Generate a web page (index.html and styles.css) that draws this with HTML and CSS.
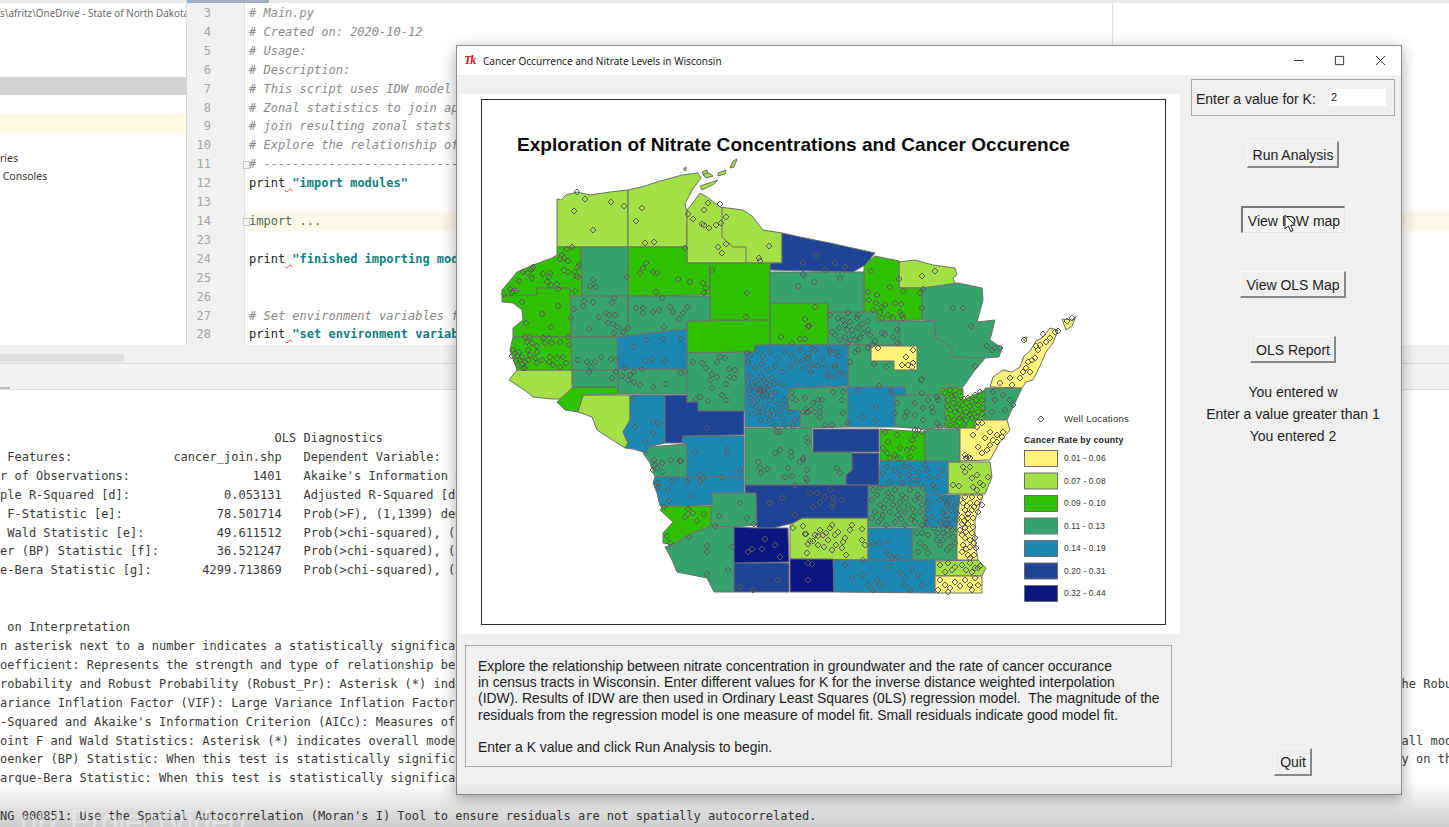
FILE: index.html
```html
<!DOCTYPE html>
<html lang="en">
<head>
<meta charset="utf-8">
<title>Cancer Occurrence and Nitrate Levels in Wisconsin</title>
<link rel="stylesheet" href="styles.css">
</head>
<body>
<div class="ide">
  <div class="top-strip"><span class="top-tab"></span></div>
  <div class="workspace">
    <aside class="project">
      <div class="path">s\afritz\OneDrive - State of North Dakota</div>
      <div class="band"></div>
      <div class="cream"></div>
      <div class="tree">ries</div>
      <div class="tree tree-b">&nbsp;Consoles</div>
    </aside>
    <section class="editor">
      <div class="gutter">
        <div>3</div><div>4</div><div>5</div><div>6</div><div>7</div><div>8</div><div>9</div><div>10</div><div>11</div><div>12</div><div>13</div><div>14</div><div>23</div><div>24</div><div>25</div><div>26</div><div>27</div><div>28</div>
      </div>
      <div class="code">
        <div class="cm"># Main.py</div>
        <div class="cm"># Created on: 2020-10-12</div>
        <div class="cm"># Usage:</div>
        <div class="cm"># Description:</div>
        <div class="cm"># This script uses IDW model to interpolate</div>
        <div class="cm"># Zonal statistics to join applied values</div>
        <div class="cm"># join resulting zonal stats to the tracts</div>
        <div class="cm"># Explore the relationship of nitrate and cancer</div>
        <div class="cm"><span class="fold"></span># ----------------------------------------</div>
        <div><span class="kw">print</span><span class="sq">&nbsp;</span><span class="str">"import modules"</span></div>
        <div>&nbsp;</div>
        <div class="hl"><span class="fold"></span><span class="imp">import ...</span></div>
        <div>&nbsp;</div>
        <div><span class="kw">print</span><span class="sq">&nbsp;</span><span class="str">"finished importing modules"</span></div>
        <div>&nbsp;</div>
        <div>&nbsp;</div>
        <div class="cm"># Set environment variables for the project</div>
        <div><span class="kw">print</span><span class="sq">&nbsp;</span><span class="str">"set environment variables"</span></div>
      </div>
    </section>
    <aside class="side-right"></aside>
  </div>
  <div class="hscroll"><span class="hscroll-thumb"></span></div>
  <div class="toolbar"><span class="toolbar-mark"></span></div>
  <pre class="console">                                      OLS Diagnostics
 Features:              cancer_join.shp   Dependent Variable:
r of Observations:                 1401   Akaike's Information Criterion
ple R-Squared [d]:             0.053131   Adjusted R-Squared [d]
 F-Statistic [e]:             78.501714   Prob(&gt;F), (1,1399) degrees of freedom
 Wald Statistic [e]:          49.611512   Prob(&gt;chi-squared), (1) degrees of freedom
er (BP) Statistic [f]:        36.521247   Prob(&gt;chi-squared), (1) degrees of freedom
e-Bera Statistic [g]:       4299.713869   Prob(&gt;chi-squared), (2) degrees of freedom


 on Interpretation
n asterisk next to a number indicates a statistically significant p-value (p &lt; 0.01).
oefficient: Represents the strength and type of relationship between each explanatory variable and the dependent variable.
robability and Robust Probability (Robust_Pr): Asterisk (*) indicates a coefficient is statistically significant (p &lt; 0.01); if the Koenker (BP) Statistic [f] is statistically significant, use the Robust Probability column
ariance Inflation Factor (VIF): Large Variance Inflation Factor (VIF) values (&gt; 7.5) indicate redundancy among explanatory variables.
-Squared and Akaike's Information Criterion (AICc): Measures of model fit/performance.
oint F and Wald Statistics: Asterisk (*) indicates overall model significance (p &lt; 0.01); if the Koenker (BP) Statistic [f] is statistically significant, use the Wald Statistic to determine overall model significance.
oenker (BP) Statistic: When this test is statistically significant (p &lt; 0.01), the relationships modeled are not consistent (either due to non-stationarity or heteroskedasticity). You should rely on the Robust
arque-Bera Statistic: When this test is statistically significant (p &lt; 0.01) model predictions are biased.

NG 000851: Use the Spatial Autocorrelation (Moran's I) Tool to ensure residuals are not spatially autocorrelated.</pre>
</div>

<div class="window">
  <header class="titlebar">
    <span class="tk">Tk</span>
    <span class="title">Cancer Occurrence and Nitrate Levels in Wisconsin</span>
    <span class="controls">
      <svg class="ctl" viewBox="0 0 12 12"><path d="M1 6h10"/></svg>
      <svg class="ctl" viewBox="0 0 12 12"><path d="M1.5 1.5h9v9h-9z"/></svg>
      <svg class="ctl" viewBox="0 0 12 12"><path d="M1 1l10 10M11 1L1 11"/></svg>
    </span>
  </header>
  <div class="content">
    <div class="left-col">
      <div class="map-panel">
        <div class="map-frame">
          <svg class="map" viewBox="483 101 681 522" width="681" height="522">
            <defs>
              <marker id="well" markerUnits="userSpaceOnUse" markerWidth="9" markerHeight="9" refX="4.5" refY="4.5">
                <path class="well-mark" d="M4.5 1.5L7.5 4.5 4.5 7.5 1.5 4.5z"/>
              </marker>
            </defs>
            <text class="map-title" x="517" y="151">Exploration of Nitrate Concentrations and Cancer Occurence</text>

            <g class="county">
              <!-- light green -->
              <polygon class="c2" points="557,199 561,200 566,195 577,192 590,195 610,192 628,190 628,247 557,247"/>
              <polygon class="c2" points="628,190 645,186 660,181 664,180 682,175 698,173 701,178 692,190 685,204 687,212 687,247 628,247"/>
              <polygon class="c2" points="687,210 692,204 700,193 707,197 720,207 743,210 752,216 763,230 782,233 782,263 687,263"/>
              <polyline class="inner" points="722,207 722,237 733,247 746,247 746,263"/>
              <polygon class="c2" points="509,380 517,370 572,370 572,399 552,399 533,397 527,392"/>
              <polygon class="c2" points="583,395 630,395 630,420 623,432 628,443 625,448 597,430 592,417 578,412"/>
              <polygon class="c2" points="790,525 802,518 868,518 868,560 790,559"/>
              <polygon class="c2" points="899,262 915,260 933,265 955,268 957,275 953,278 957,288 899,288"/>
              <polygon class="c2" points="948,462 990,462 992,477 985,494 948,494"/>
              <polygon class="c2" points="935,561 978,560 986,568 982,576 935,576"/>
              <!-- green -->
              <polygon class="c3" points="557,247 581,247 582,296 570,296 570,288 537,288 537,295 502,296 502,290 513,277 517,272 533,265 552,258 557,255"/>
              <polygon class="c3" points="502,296 537,295 537,288 570,288 571,337 513,337 513,328 523,320 522,310 513,303 502,302"/>
              <polygon class="c3" points="628,247 687,247 687,263 710,263 710,295 628,296"/>
              <polygon class="c3" points="710,263 770,263 770,320 710,320"/>
              <polygon class="c3" points="687,321 770,320 770,345 755,346 755,352 687,353"/>
              <polygon class="c3" points="513,337 571,337 572,370 530,370 517,370 510,350"/>
              <polygon class="c3" points="557,402 573,387 618,387 618,394 583,395 578,412 565,410"/>
              <polygon class="c3" points="663,506 711,506 711,526 693,533 672,545 663,543 663,533 673,522 660,510"/>
              <polygon class="c3" points="770,303 828,303 828,345 770,345"/>
              <polygon class="c3" points="864,265 875,256 899,261 899,288 922,288 922,320 877,321 877,312 864,312"/>
              <polygon class="c3" points="880,429 925,432 925,461 880,461"/>
              <polygon class="c3" points="940,388 963,388 963,400 985,390 985,420 975,420 975,428 945,428 945,407 940,397"/>
              <!-- teal -->
              <polygon class="c4" points="581,247 628,247 628,296 582,296"/>
              <polygon class="c4" points="571,296 628,296 628,327 617,337 571,337"/>
              <polygon class="c4" points="628,296 710,296 710,321 687,321 687,329 617,337 628,327"/>
              <polygon class="c4" points="571,337 617,337 618,370 572,370"/>
              <polygon class="c4" points="572,370 618,370 618,387 573,387"/>
              <polygon class="c4" points="618,369 687,369 687,394 618,394"/>
              <polygon class="c4" points="687,353 755,352 745,352 745,411 698,411 698,402 687,402"/>
              <polygon class="c4" points="648,447 687,444 687,477 655,477 650,463 643,453"/>
              <polygon class="c4" points="712,493 756,493 756,525 734,527 711,526"/>
              <polygon class="c4" points="672,545 693,533 711,526 734,527 734,592 714,592 707,578 677,572 672,560 665,547"/>
              <polygon class="c4" points="745,428 812,428 812,452 852,452 852,470 846,475 846,485 745,485"/>
              <polygon class="c4" points="770,272 864,272 864,312 828,312 828,303 770,303"/>
              <polygon class="c4" points="828,312 877,312 877,321 899,321 899,345 828,345"/>
              <polygon class="c4" points="922,288 958,283 982,288 983,300 977,322 995,320 990,340 1002,348 999,357 985,358 975,370 940,370 935,337 935,321 922,320"/>
              <polygon class="c4" points="848,345 899,345 899,321 935,321 935,337 952,347 952,357 985,358 975,370 963,387 940,388 940,395 905,395 905,387 848,387"/>
              <polygon class="c4" points="895,395 945,395 945,427 925,429 895,427"/>
              <polygon class="c4" points="788,388 848,387 848,427 800,428 800,410 788,410"/>
              <polygon class="c4" points="925,429 960,429 960,462 925,461"/>
              <polygon class="c4" points="868,486 925,486 925,527 868,527"/>
              <polygon class="c4" points="912,528 957,527 957,560 912,560"/>
              <polygon class="c4" points="985,388 1022,388 1007,420 985,420"/>
              <!-- blue -->
              <polygon class="c5" points="617,337 687,329 687,369 618,369"/>
              <polygon class="c5" points="630,395 665,395 665,443 648,447 647,453 633,449 625,448 628,443 623,432 630,420"/>
              <polygon class="c5" points="683,436 744,436 744,477 687,477 687,444 682,443"/>
              <polygon class="c5" points="655,477 744,477 744,493 712,493 712,505 660,506 657,493 653,483"/>
              <polygon class="c5" points="755,345 848,345 848,386 788,388 788,410 800,410 800,427 745,427 745,352 755,352"/>
              <polygon class="c5" points="848,387 905,387 905,395 895,395 895,427 848,427"/>
              <polygon class="c5" points="880,461 948,461 948,494 925,495 925,486 868,486 879,485"/>
              <polygon class="c5" points="925,495 960,495 957,527 925,527"/>
              <polygon class="c5" points="868,528 912,528 912,560 868,560"/>
              <polygon class="c5" points="833,560 935,560 935,593 834,592"/>
              <!-- dark blue -->
              <polygon class="c6" points="782,233 800,237 830,243 875,253 865,265 853,272 770,270 770,263 782,263"/>
              <polygon class="c6" points="665,395 687,395 687,402 698,402 698,411 744,411 744,435 683,436 682,443 665,443"/>
              <polygon class="c6" points="813,429 879,429 879,452 813,452"/>
              <polygon class="c6" points="852,453 879,453 879,485 846,485 846,475 852,470"/>
              <polygon class="c6" points="745,485 868,485 868,518 802,518 793,523 773,528 757,528 756,493 745,493"/>
              <polygon class="c6" points="734,563 789,563 789,592 734,592"/>
              <!-- navy -->
              <polygon class="c7" points="734,527 757,528 788,528 789,562 734,563"/>
              <polygon class="c7" points="790,559 833,559 834,592 790,592"/>
              <!-- yellow -->
              <polygon class="c1" points="871,346 917,346 917,370 894,370 894,361 871,361"/>
              <polygon class="c1" points="960,428 975,428 975,420 1007,420 1010,430 1000,442 990,460 960,461"/>
              <polygon class="c1" points="960,495 983,495 975,520 975,542 978,560 957,560 957,527"/>
              <polygon class="c1" points="935,576 982,576 982,593 935,593"/>
              <polygon class="c1" points="990,387 993,377 1003,370 1012,372 1020,367 1024,356 1030,351 1036,341 1042,338 1050,328 1058,330 1053,343 1046,352 1040,366 1033,380 1026,382 1022,388"/>
              <polygon class="c1" points="1062,319 1072,320 1076,316 1072,326 1066,330"/>
              <polygon class="c1" points="1022,338 1027,337 1026,342"/>
              <!-- Apostle islands -->
              <polygon class="c2" points="733,161 737,159 734,167 730,168"/>
              <polygon class="c2" points="702,172 707,170 708,174 704,176"/>
              <polygon class="c2" points="703,174 709,173 713,176 706,178"/>
              <polygon class="c2" points="718,173 726,170 725,174 718,176"/>
              <polygon class="c2" points="700,186 718,180 714,184 702,190"/>
              <polygon class="c2" points="683,169 686,167 686,171"/>
            </g>

            <g class="wells">
              <polyline points="577,192 585,199 611,202 624,206 574,211 593,230 642,208 636,221 645,243 654,242 708,203 704,210 688,214 693,219 726,217 720,204 702,224 704,225 709,228 716,225 721,223 718,247 726,244 722,253 769,246 759,258 760,261 685,248"/>
              <polyline points="572,247 567,249 562,255 560,259 564,258 568,261 579,265 578,267 575,272 564,270 568,272 576,276 578,277 533,267 532,269 523,272 528,273 532,278 519,281 543,274 550,273 549,277 547,282 551,285 557,284 558,289 575,291 513,291 510,289 504,294 512,293 516,291 522,302 542,314 558,306 526,323 551,327"/>
              <polyline points="525,337 530,337 543,338 549,338 527,342 532,343 537,346 545,343 552,343 560,342 568,337 569,345 513,350 517,356 520,360 525,362 518,365 525,368 530,355 528,350 535,358 537,352 530,355 542,360 550,357 549,362 557,358 553,365 563,357 566,363 560,367 537,363 523,368 515,353 519,352 522,357 516,361 512,356 522,364 528,360"/>
              <polyline points="593,280 590,286 596,287 627,277 646,263 643,268 640,273 653,272 657,273 678,279 690,282 703,283 706,288 704,293 656,292 662,298 712,270 747,293 746,317 593,302 584,301 583,306 574,309 571,318 614,298 612,303 606,313 609,315 615,315 599,317 608,323 613,324 618,327 628,328 623,332 614,333 589,329"/>
              <polyline points="636,308 643,308 643,313 653,312 659,310 670,307 673,312 687,307 683,313 679,319 664,327 747,353 646,340 663,339 681,339 634,347 645,361 652,359 665,361 625,368 578,360 587,362 595,362 601,357 611,359 616,360 591,367 589,372 693,362 702,363 706,368 717,362 720,357 725,358 729,369 717,377 616,372 612,378 622,376 630,375 634,372 642,369 628,380 634,382 640,385 653,387 666,384 681,373 685,372 710,380 712,388 726,384 730,377 734,378 735,370 712,374 722,395 726,400 696,399 700,397 708,401"/>
              <polyline points="750,355 757,350 763,356 770,352 778,358 785,352 792,356 800,350 808,354 815,350 822,358 830,352 838,356 835,365 826,366 748,362 755,368 762,364 768,370 775,366 782,372 790,366 797,362 804,368 811,372 818,366 828,374 840,372 750,376 756,381 761,376 766,383 772,378 768,390 760,388 760,390 761,391 754,392 750,398 757,400 763,396 770,400 776,392 782,384 765,406 772,410 778,404 758,412 752,405 785,400 790,412 795,420 782,418 770,420 760,420 748,382 753,386 758,384 764,380 770,385 775,384 758,394 764,390 767,395 772,396 749,390 756,406 762,412 768,414 774,414 752,414 780,410 786,406 775,425 785,425 793,426"/>
              <polyline points="805,398 813,403 822,400 833,392 843,392 842,400 843,413 820,407 820,412 807,412 820,417 825,425 832,425 848,423 796,400 792,392 792,398 803,412 808,412 815,412 818,400 811,410 806,409 858,390 876,406 862,417 876,420 891,391 892,393 895,413 907,412 905,417 897,403 915,403 923,408 932,407 928,400 938,400 922,393 937,397 915,415 933,412 923,420 937,423 940,427"/>
              <polyline points="945,393 950,390 955,395 960,392 948,400 953,403 958,400 963,405 968,398 975,395 980,392 972,402 978,405 982,400 950,410 955,412 960,410 966,412 972,410 978,412 983,408 948,418 954,420 960,418 966,420 972,418 978,422 950,425 957,426 964,424 952,396 957,407 964,399 970,406 976,400 947,406 962,416 970,415 976,417 982,414"/>
              <polyline points="885,432 888,442 883,448 887,453 897,435 900,448 895,455 900,458 912,440 915,435 918,430 915,430 922,432 907,450 897,458 913,448 910,457 890,458 807,438 808,442 758,462 760,468 761,473 767,469 780,450 775,453 791,452 791,457 803,458 800,462 788,468 792,476 785,477 807,470 806,478 777,432 780,432 795,485 837,468 840,473 807,480 803,460"/>
              <polyline points="695,452 727,450 727,453 740,470 700,475 703,478 722,477 634,398 635,427 653,422 658,423 653,433 645,442 707,428 654,460 662,463 671,460 680,461 681,461 655,465 657,468 662,472 653,470 658,483 658,487 672,482 687,482 700,482 668,490 692,496 669,501 664,507 688,509 685,517 688,514 693,513 704,514 697,521 667,536 670,543 689,537 740,503 719,516 747,518 715,526 754,524 707,546 707,552 732,547 707,574 728,570 765,539 752,549 748,552 762,549 775,545 780,557 740,587 778,580 753,590 808,563 812,564 808,580"/>
              <polyline points="793,528 803,526 806,534 818,536 808,544 813,541 807,553 805,534 810,541 815,535 820,530 826,533 830,528 832,525 828,540 835,535 838,532 824,547 832,550 843,542 842,548 852,525 862,529 862,540 865,545 863,560 818,545 823,535 873,544 879,543 888,541 887,552 890,555 898,557 892,558 917,533 922,533 928,535 937,540 943,533 947,530 948,535 920,543 925,547 918,552 928,553 943,540 950,547 947,550 940,545 955,543 953,537 952,530 943,528 845,538 850,530 836,545 846,555 938,533 946,524 950,520 946,516 940,522 934,528 845,565 852,578 862,575 868,585 877,580 873,590 880,585 900,572 905,578 912,570 918,575 922,585 910,590 905,585 890,566"/>
              <polyline points="928,502 947,503 943,512 932,517 947,505 957,513 957,520 928,510 927,523 950,527 873,490 880,488 888,493 895,490 902,495 910,490 918,495 872,500 880,505 886,500 893,505 900,502 908,505 915,500 922,505 875,512 883,515 890,512 898,515 905,512 913,516 920,512 925,518 878,522 886,525 895,522 905,525 915,522 922,525 887,467 883,473 895,470 900,475 910,468 918,472 927,470 930,477 913,480 935,488 923,488 938,477 942,470 890,482 902,483 933,485 833,503 825,497 842,500 817,493 813,507 832,507 770,503 782,498 795,515 810,493 820,502 833,498 830,490 877,495 884,508 892,498 899,509 906,498 913,509 920,498 911,519 901,519 881,519 872,518 909,475 918,480 925,465 904,466 945,498 952,498 955,505 940,500 951,510 945,520"/>
              <polyline points="982,423 990,432 997,435 1003,432 985,438 993,440 1002,437 978,447 987,450 982,453 965,455 968,457 970,458 966,458 990,445 973,435 977,427 997,442 963,467 970,467 965,472 972,478 977,475 988,477 980,483 953,485 959,486 973,487 983,485 977,490"/>
              <polyline points="965,497 972,497 980,497 963,503 970,503 977,503 982,505 965,510 972,510 978,512 962,517 968,518 973,518 962,524 968,524 973,527 960,530 966,532 972,533 965,538 970,540 975,538 963,545 970,547 976,548 962,552 968,555 974,555 940,565 948,563 955,567 962,565 970,563 975,568 980,566 945,572 952,570 966,570 972,572 978,568 940,580 945,585 938,590 950,588 955,582 960,586 965,580 970,585 972,590 975,578 978,585 948,592 960,500 967,506 974,507 968,514 964,521 965,528 962,535 974,543 966,549 970,558"/>
              <polyline points="1000,383 1010,378 1020,378 1012,385 1023,372 1032,360 1038,350 1040,345 1046,342 1050,338 1055,332 1058,331 1028,362 1035,358 993,392 995,400 1003,395 1010,400 1005,410 1013,405 992,412 953,308 963,308 971,326 987,346 992,350 995,348 1000,348 975,366 1026,368 1030,372 1036,346 1043,334 1067,321 1072,318 1024,340"/>
              <polyline points="848,313 858,315 857,318 850,322 868,321 830,315 832,332 839,328 845,325 852,330 858,328 863,333 870,335 845,337 850,340 860,338 848,343 875,341 885,334 893,337 897,330 882,333 898,343 858,350 868,348 855,352 871,271 890,287 868,292 877,295 869,300 876,303 885,305 895,303 901,304 882,307 873,310 880,312 888,315 900,312 902,315 882,318 893,318 903,318 903,291 920,293 923,289 922,308 899,279 922,276 935,271 838,318 843,320 847,330 853,335 855,340 862,324 868,330 835,335 840,340 872,345 878,348"/>
              <polyline points="804,275 814,282 840,278 803,274 798,286 815,307 805,319 808,326 809,326 781,337 800,339 805,339 792,343 803,263 816,255 845,267 825,270 835,263 812,348 830,350 837,352 808,358 813,365 803,360 835,367 850,362 828,377 835,376 843,374 810,365 913,350 906,357 902,365 908,365 913,363 912,367 874,364 886,367 922,379 921,380 879,386 1041,419"/>
            </g>

            <text class="legend-label" x="1064" y="422">Well Locations</text>
            <text class="legend-title" x="1024" y="443">Cancer Rate by county</text>
            <g class="legend">
              <rect class="c1" x="1024.5" y="450.5" width="33" height="16"/><text class="legend-item" x="1064" y="461">0.01 - 0.06</text>
              <rect class="c2" x="1024.5" y="473" width="33" height="16"/><text class="legend-item" x="1064" y="484">0.07 - 0.08</text>
              <rect class="c3" x="1024.5" y="495.5" width="33" height="16"/><text class="legend-item" x="1064" y="506">0.09 - 0.10</text>
              <rect class="c4" x="1024.5" y="518" width="33" height="16"/><text class="legend-item" x="1064" y="529">0.11 - 0.13</text>
              <rect class="c5" x="1024.5" y="540.5" width="33" height="16"/><text class="legend-item" x="1064" y="551">0.14 - 0.19</text>
              <rect class="c6" x="1024.5" y="563" width="33" height="16"/><text class="legend-item" x="1064" y="574">0.20 - 0.31</text>
              <rect class="c7" x="1024.5" y="585.5" width="33" height="16"/><text class="legend-item" x="1064" y="596">0.32 - 0.44</text>
            </g>
          </svg>
        </div>
      </div>
      <div class="intro">Explore the relationship between nitrate concentration in groundwater and the rate of cancer occurance<br>in census tracts in Wisconsin. Enter different values for K for the inverse distance weighted interpolation<br>(IDW). Results of IDW are then used in Ordinary Least Squares (0LS) regression model.  The magnitude of the<br>residuals from the regression model is one measure of model fit. Small residuals indicate good model fit.<br><br>Enter a K value and click Run Analysis to begin.</div>
    </div>
    <div class="right-col">
      <div class="k-frame">
        <label class="k-label">Enter a value for K:</label>
        <span class="k-entry">2</span>
      </div>
      <button class="btn btn-first">Run Analysis</button>
      <button class="btn btn-hover">View IDW map</button>
      <button class="btn">View OLS Map</button>
      <button class="btn">OLS Report</button>
      <div class="messages">
        <div>You entered w</div>
        <div>Enter a value greater than 1</div>
        <div>You entered 2</div>
      </div>
      <button class="btn btn-quit">Quit</button>
    </div>
  </div>
  <svg class="cursor" viewBox="0 0 12 19" width="12" height="19"><path d="M1 1v14l3.4-3 2.3 5.6 2.4-1-2.3-5.4H11z"/></svg>
</div>
<div class="video-fade"><span class="video-mark">ntz ProjectVideo</span></div>
</body>
</html>
```
FILE: styles.css
```css
* { box-sizing: border-box; }
html, body { margin: 0; height: 100%; }
body {
  width: 1449px;
  height: 827px;
  overflow: hidden;
  position: relative;
  background: #fff;
  font-family: "Liberation Sans", Arial, sans-serif;
}

/* Background IDE */
.ide { display: flex; flex-direction: column; height: 827px; }
.top-strip { height: 3px; background: #e9e9e9; padding-left: 187px; flex: none; }
.top-tab { display: block; width: 82px; height: 3px; background: #9fb0c0; }
.workspace { display: flex; height: 342px; flex: none; overflow: hidden; }

.project { width: 187px; flex: none; border-right: 1px solid #d6d6d6; overflow: hidden; color: #444; font-family: "Noto Sans", sans-serif; }
.path { font-size: 9.9px; line-height: 18px; margin-top: 1px; color: #6a6a6a; white-space: nowrap; }
.band { height: 18px; background: #d2d2d2; margin-top: 55px; }
.cream { height: 19px; background: #fdfbe4; margin-top: 19px; }
.tree { font-size: 10.5px; line-height: 18px; color: #333; margin-top: 16px; white-space: nowrap; }
.tree-b { margin-top: 0; }

.editor { width: 926px; flex: none; display: flex; border-right: 1px solid #e0e0e0; font: 12px/18.9px "DejaVu Sans Mono", monospace; }
.gutter { width: 58px; flex: none; background: #f1f1f1; color: #a5a5a5; text-align: right; padding: 1px 33px 0 0; border-right: 1px solid #ddd; }
.code { flex: 1; padding: 1px 0 0 4px; min-width: 0; }
.code > div { white-space: pre; position: relative; }
.cm { color: #8a8a8a; font-style: italic; }
.kw { color: #222; }
.str { color: #127f7f; font-weight: bold; }
.imp { color: #4c6a4c; }
.sq { text-decoration: underline wavy #e04040 1px; }
.hl { background: #fdf9ea; margin-left: -4px; padding-left: 4px; width: 1262px; }
.fold { position: absolute; left: -6px; top: 6px; width: 7px; height: 8px; background: #f6f6f6; border: 1px solid #c9c9c9; }
.hl .fold { left: -2px; }
.side-right { flex: 1; }

.hscroll { height: 19px; flex: none; background: #f2f2f2; display: flex; align-items: flex-end; border-bottom: 1px solid #dcdcdc; }
.hscroll-thumb { display: block; width: 124px; height: 8px; background: #dfdfdf; margin-bottom: 1px; }
.toolbar { height: 26px; flex: none; background: #f4f4f4; border-bottom: 1px solid #dcdcdc; position: relative; display: flex; align-items: flex-end; }
.toolbar-mark { display: block; width: 10px; height: 2px; background: #bbb; }
.console { margin: 0; padding: 39px 0 0 0; flex: 1; font: 12px/18.9px "DejaVu Sans Mono", monospace; color: #3a3a3a; overflow: hidden; white-space: pre; }

/* Tk window */
.window {
  position: absolute;
  left: 456px;
  top: 45px;
  width: 946px;
  height: 750px;
  display: flex;
  flex-direction: column;
  background: #f0f0f0;
  border: 1px solid #8d8d8d;
  box-shadow: 0 4px 14px rgba(0, 0, 0, .35);
}
.titlebar { height: 29px; flex: none; background: #fff; display: flex; align-items: center; padding-left: 7px; }
.tk { font: italic bold 12px "Liberation Serif", serif; color: #e01010; width: 19px; letter-spacing: -1px; }
.title { font: 10.05px "Noto Sans", sans-serif; color: #222; white-space: nowrap; }
.controls { margin-left: auto; display: flex; gap: 30px; padding-right: 15px; }
.ctl { width: 11px; height: 11px; fill: none; stroke: #222; stroke-width: 1; }
.content { flex: 1; display: flex; min-height: 0; }
.left-col { width: 723px; flex: none; padding: 19px 0 0 3px; }
.map-panel { width: 720px; height: 540px; background: #fff; padding: 5px 0 0 21px; }
.map-frame { width: 685px; height: 526px; border: 1px solid #2a2a2a; padding: 1px; background: #fff; }
.map { display: block; }
.map-title { font: bold 19px "Liberation Sans", Arial, sans-serif; fill: #0a0a0a; letter-spacing: .05px; }
.county polygon, .legend rect { stroke: #6e6e6e; stroke-width: 1; stroke-linejoin: miter; }
.inner { fill: none; stroke: #6e6e6e; stroke-width: 1; }
.c1 { fill: #fff27a; }
.c2 { fill: #a2e046; }
.c3 { fill: #2fc000; }
.c4 { fill: #35a36b; }
.c5 { fill: #1a88b3; }
.c6 { fill: #1f4496; }
.c7 { fill: #0b1680; }
.wells polyline { fill: none; stroke: none; marker: url(#well); }
.well-mark { fill: none; stroke: #5a5a5a; stroke-width: 1; }
.legend-label { font: 9.6px "Liberation Sans", Arial, sans-serif; fill: #333; letter-spacing: .2px; }
.legend-title { font: bold 8.8px "Liberation Sans", Arial, sans-serif; fill: #222; letter-spacing: .2px; }
.legend-item { font: 8.4px "Liberation Sans", Arial, sans-serif; fill: #333; letter-spacing: .15px; }
.intro { width: 707px; height: 122px; margin: 11px 0 0 5px; border: 1px solid #a9a9a9; padding: 12px 0 0 12px; font-size: 13.9px; line-height: 16.2px; color: #1c1c1c; white-space: pre; }

.right-col { flex: 1; display: flex; flex-direction: column; align-items: center; padding: 4px 0 18px 5px; font-size: 14px; color: #1c1c1c; }
.k-frame { width: 204px; height: 37px; flex: none; border: 1px solid #a9a9a9; display: flex; align-items: center; padding: 2px 0 0 4px; }
.k-label { width: 133px; flex: none; }
.k-entry { width: 57px; height: 17px; background: #fff; font-size: 11px; line-height: 17px; padding-left: 2px; margin-top: -2px; }
.btn { flex: none; height: 27px; margin-top: 38px; padding: 1px 4px 0 5px; font: 14px "Liberation Sans", Arial, sans-serif; color: #1c1c1c; background: #f0f0f0; border: 1px solid; border-color: #f8f8f8 #888 #888 #f8f8f8; border-width: 1px 2px 2px 1px; }
.btn-first { margin-top: 25px; }
.btn-hover { border-color: #777 #e2e2e2 #e2e2e2 #777; border-width: 2px 1px 1px 2px; background: #f3f3f3; }
.messages { margin-top: 18px; text-align: center; line-height: 22px; }
.btn-quit { margin-top: auto; height: 28px; }
.cursor { position: absolute; left: 827px; top: 168px; fill: #fff; stroke: #222; stroke-width: 1; }

/* Video overlay */
.video-fade { position: absolute; left: 0; right: 0; bottom: 0; height: 45px; background: linear-gradient(rgba(0,0,0,0), rgba(0,0,0,.2)); overflow: hidden; }
.video-mark { position: absolute; left: 20px; top: 22px; font: 31px "Liberation Sans", Arial, sans-serif; color: rgba(255,255,255,.4); white-space: nowrap; }
```
